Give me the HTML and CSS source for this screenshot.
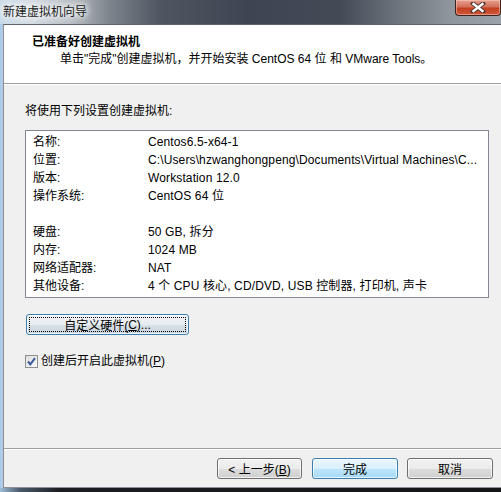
FILE: index.html
```html
<!DOCTYPE html>
<html>
<head>
<meta charset="utf-8">
<link rel="stylesheet" href="styles.css">
</head>
<body>
<div class="window">
  <div class="titlebar">
    <span class="title">新建虚拟机向导</span>
    <div class="close">
      <svg width="16" height="11" viewBox="0 0 16 11"><path d="M3 1.5 L13 9.5 M13 1.5 L3 9.5" stroke="#4a3430" stroke-width="4.2" stroke-linecap="square"/><path d="M3.5 2 L12.5 9 M12.5 2 L3.5 9" stroke="#ffffff" stroke-width="2.4" stroke-linecap="square"/></svg>
    </div>
  </div>
  <div class="frame">
    <div class="edge"></div>
    <div class="content">
      <div class="header">
        <div class="h-title">已准备好创建虚拟机</div>
        <div class="h-sub">单击"完成"创建虚拟机，并开始安装 CentOS 64 位 和 VMware Tools。</div>
      </div>
      <div class="body">
        <div class="intro">将使用下列设置创建虚拟机:</div>
        <div class="listbox">
          <div class="row"><span class="k">名称:</span><span class="v">Centos6.5-x64-1</span></div>
          <div class="row"><span class="k">位置:</span><span class="v">C:\Users\hzwanghongpeng\Documents\Virtual Machines\C...</span></div>
          <div class="row"><span class="k">版本:</span><span class="v">Workstation 12.0</span></div>
          <div class="row"><span class="k">操作系统:</span><span class="v">CentOS 64 位</span></div>
          <div class="row"></div>
          <div class="row"><span class="k">硬盘:</span><span class="v">50 GB, 拆分</span></div>
          <div class="row"><span class="k">内存:</span><span class="v">1024 MB</span></div>
          <div class="row"><span class="k">网络适配器:</span><span class="v">NAT</span></div>
          <div class="row"><span class="k">其他设备:</span><span class="v">4 个 CPU 核心, CD/DVD, USB 控制器, 打印机, 声卡</span></div>
        </div>
        <button class="btn custom"><span class="focus">自定义硬件(<u>C</u>)...</span></button>
        <label class="check">
          <span class="box"><svg width="11" height="11" viewBox="0 0 11 11"><path d="M2 5.5 L4.3 8.3 L9 2.2" fill="none" stroke="#3d5a9e" stroke-width="2"/></svg></span>
          <span>创建后开启此虚拟机(<u>P</u>)</span>
        </label>
      </div>
      <div class="footer">
        <button class="btn">&lt; 上一步(<u>B</u>)</button>
        <button class="btn default">完成</button>
        <button class="btn">取消</button>
      </div>
    </div>
  </div>
  <div class="taskbar"></div>
</div>
</body>
</html>
```

FILE: styles.css
```css
* { box-sizing: border-box; }
html, body { margin: 0; padding: 0; }
body {
  width: 501px;
  height: 492px;
  overflow: hidden;
  font-family: "Liberation Sans", "Noto Sans CJK SC", sans-serif;
  font-size: 12px;
  color: #000;
  background: #f0f0f0;
}
.window {
  width: 501px;
  height: 492px;
  display: flex;
  flex-direction: column;
}
.titlebar {
  height: 24px;
  flex: none;
  display: flex;
  align-items: flex-start;
  background: linear-gradient(to right, #c9dbea 0%, #d3dbe2 6%, #b8bec4 14%, #7c838b 22%, #4e5661 32%, #3d4552 50%, #434b57 68%, #6f767e 80%, #8f969d 90%, #9aa1a7 100%);
}
.title {
  padding: 5px 0 0 3px;
  line-height: 14px;
  color: #1a1a1a;
  text-shadow: 0 0 6px #fff, 0 0 8px #fff, 0 0 10px #fff;
}
.close {
  margin-left: auto;
  width: 46px;
  height: 16px;
  border: 1px solid #3b2420;
  border-top: none;
  border-radius: 0 0 4px 4px;
  background: linear-gradient(#e6a08e 0%, #d3705a 45%, #c2401f 55%, #d0583a 100%);
  box-shadow: inset 0 0 0 1px rgba(255,210,200,0.5);
  display: flex;
  align-items: center;
  justify-content: center;
}
.frame {
  flex: 1;
  display: flex;
  min-height: 0;
}
.edge {
  width: 3px;
  background: #aecbe7;
}
.content {
  flex: 1;
  display: flex;
  flex-direction: column;
  border-left: 1px solid #8b9096;
  border-top: 1px solid #5c636c;
  border-bottom: 1px solid #8b9096;
}
.header {
  height: 59px;
  background: #fff;
  border-bottom: 1px solid #a0a0a0;
  box-shadow: 0 1px 0 #fff;
  padding: 9px 0 0 28px;
  flex: none;
}
.h-title {
  font-weight: bold;
  line-height: 16px;
  height: 17px;
}
.h-sub {
  line-height: 16px;
  padding-left: 28px;
}
.body {
  flex: 1;
  padding: 19px 0 0 21px;
}
.intro {
  line-height: 16px;
}
.listbox {
  margin-top: 11px;
  width: 464px;
  height: 168px;
  background: #fff;
  border: 1px solid #828790;
  padding: 2px 0 2px 7px;
}
.row {
  height: 18px;
  line-height: 18px;
  display: flex;
  white-space: nowrap;
}
.k { width: 115px; flex: none; }
.v { flex: none; letter-spacing: 0.12px; }
.btn {
  font-family: inherit;
  font-size: 12px;
  color: #000;
  height: 21px;
  width: 86px;
  padding: 0;
  border: 1px solid #707070;
  border-radius: 3px;
  background: linear-gradient(#f2f2f2 0%, #ebebeb 50%, #dddddd 51%, #cfcfcf 100%);
  box-shadow: inset 0 0 0 1px rgba(255,255,255,0.7);
}
.btn.default {
  border-color: #3c7fb1;
  background: linear-gradient(#eaf6fd 0%, #d9f0fc 50%, #bee6fd 51%, #a7d9f5 100%);
}
.btn.custom {
  display: block;
  margin: 16px 0 0 1px;
  width: 163px;
  padding: 2px;
  border-color: #3c7fb1;
  background: linear-gradient(#f1f4f7 0%, #e7ecf0 50%, #d9e0e6 51%, #ccd6de 100%);
}
.focus {
  display: flex;
  align-items: center;
  justify-content: center;
  height: 100%;
  border: 1px dotted #000;
}
.check {
  margin-top: 19px;
  display: flex;
  align-items: center;
  gap: 3px;
  height: 14px;
  line-height: 14px;
}
.box {
  width: 13px;
  height: 13px;
  border: 1px solid #8e8f8f;
  background: linear-gradient(135deg, #dcdcdc, #fbfbfb);
  display: flex;
  align-items: center;
  justify-content: center;
}
.footer {
  height: 39px;
  flex: none;
  border-top: 1px solid #a0a0a0;
  box-shadow: inset 0 1px 0 #fff;
  padding: 9px 8px 0 0;
  display: flex;
  justify-content: flex-end;
  gap: 9px;
}
.footer .btn:first-child { width: 85px; margin-right: 1px; }
.taskbar {
  height: 4px;
  flex: none;
  background: linear-gradient(to right, #9fbcd8 0%, #4a5a6a 4%, #1b1d20 12%, #141517 100%);
}
```
